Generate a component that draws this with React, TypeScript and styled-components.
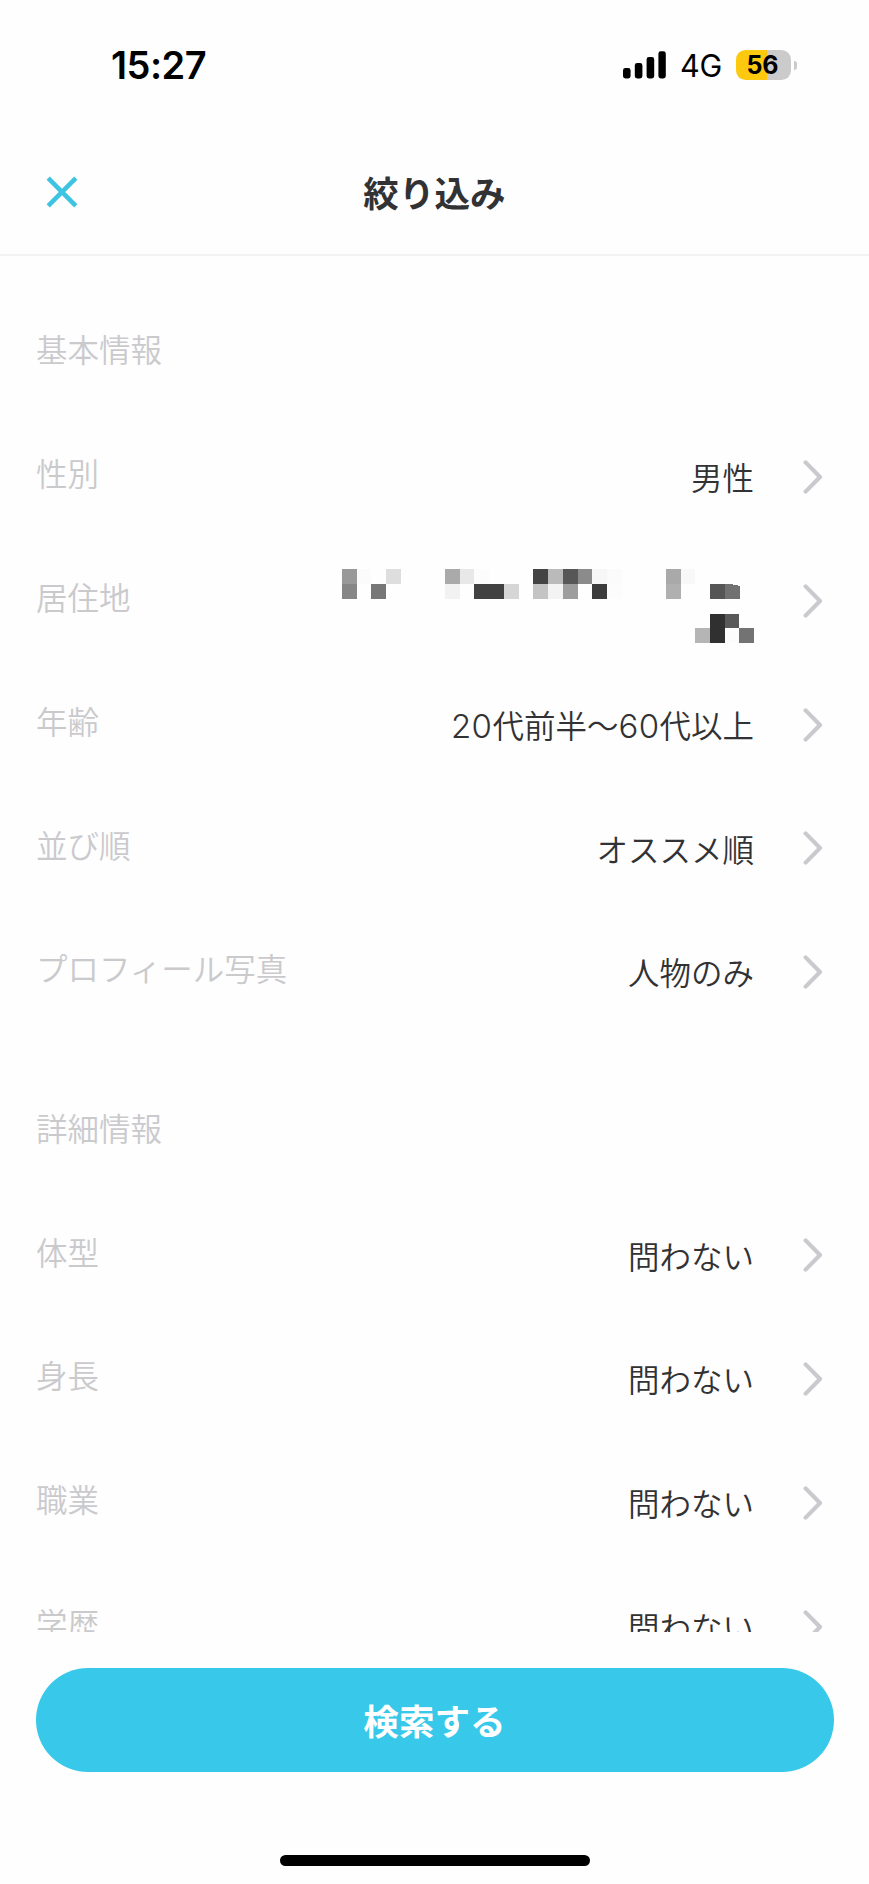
import React from "react";
import styled, { createGlobalStyle } from "styled-components";

const GlobalStyle = createGlobalStyle`
  *, *::before, *::after { box-sizing: border-box; }
  body { margin: 0; background: #fefefe; }
`;

const Screen = styled.div`
  display: flex;
  flex-direction: column;
  width: 869px;
  height: 1884px;
  overflow: hidden;
  background: #fefefe;
  color: #323234;
  font-family: Inter, "Noto Sans CJK JP", sans-serif;
`;

const StatusBar = styled.div`
  display: flex;
  flex: none;
  align-items: center;
  justify-content: space-between;
  height: 130px;
  padding: 0 72px 0 111px;
  color: #000;
`;

const Clock = styled.time`
  font-size: 38px;
  font-weight: 600;
  letter-spacing: -0.5px;
`;

const StatusIcons = styled.div`
  display: flex;
  align-items: center;
`;

const Network = styled.span`
  margin: 1px 14px 0 14px;
  font-size: 30.5px;
  letter-spacing: -0.2px;
`;

const Battery = styled.div`
  display: flex;
  align-items: center;
  gap: 3px;
`;

const BatteryBody = styled.div<{ $level: number }>`
  display: flex;
  align-items: center;
  justify-content: center;
  width: 55px;
  height: 30px;
  padding-right: 2px;
  border-radius: 9.5px;
  background: linear-gradient(90deg, #fdc90f ${(p) => p.$level}%, #cbcbcb ${(p) => p.$level}%);
  font-size: 25px;
  font-weight: 700;
`;

const BatteryTip = styled.div`
  width: 3px;
  height: 9px;
  border-radius: 0 4px 4px 0;
  background: #cbcbcb;
`;

const Header = styled.header`
  display: grid;
  grid-template-columns: 60px 1fr 60px;
  flex: none;
  align-items: center;
  height: 126px;
  padding: 0 32px;
  border-bottom: 2px solid #f3f3f4;
`;

const CloseButton = styled.button`
  display: flex;
  align-items: center;
  justify-content: center;
  width: 60px;
  height: 60px;
  padding: 0;
  border: 0;
  background: none;
`;

const Title = styled.h1`
  margin: 0;
  padding-top: 5px;
  font-size: 35.6px;
  font-weight: 700;
  line-height: 52px;
  text-align: center;
`;

const FilterList = styled.main`
  flex: none;
  height: 1376px;
  padding: 32px 36px 0;
  overflow: hidden;
`;

const Section = styled.section`
  margin-bottom: 35.6px;
`;

const SectionTitle = styled.h2`
  display: flex;
  align-items: center;
  height: 123.8px;
  margin: 0;
  padding-bottom: 3px;
  color: #cacacd;
  font-size: 31.5px;
  font-weight: 350;
`;

const Row = styled.div`
  display: flex;
  align-items: center;
  height: 123.8px;
`;

const Label = styled.span`
  flex: 1;
  padding-bottom: 3px;
  color: #cacacd;
  font-size: 31.5px;
  font-weight: 350;
`;

const Value = styled.span`
  padding-top: 11px;
  font-size: 31.5px;
  font-weight: 350;
  line-height: 46px;
  white-space: nowrap;
`;

const Digits = styled.span`
  font-size: 33px;
  letter-spacing: 0.4px;
`;

const MosaicValue = styled.span`
  display: flex;
  padding-top: 18px;
`;

const ChevronBox = styled.span`
  display: flex;
  padding-top: 6.5px;
  margin: 0 10px 0 49px;
`;

const Footer = styled.footer`
  display: flex;
  flex: none;
  flex-direction: column;
  align-items: center;
  padding: 36px 35.5px 0;
`;

const SearchButton = styled.button`
  width: 100%;
  height: 104px;
  padding: 0 0 2px;
  border: 0;
  border-radius: 52px;
  background: #37c8ea;
  color: #fff;
  font-family: inherit;
  font-size: 35.6px;
  font-weight: 700;
`;

const HomeIndicator = styled.div`
  width: 310px;
  height: 11px;
  margin-top: 83px;
  border-radius: 6px;
  background: #000;
`;

const SignalIcon = () => (
  <svg width="43" height="28" viewBox="0 0 43 28">
    <rect x="0" y="17" width="7.6" height="10.5" rx="2.4" />
    <rect x="11.8" y="12" width="7.6" height="15.5" rx="2.4" />
    <rect x="23.6" y="6" width="7.6" height="21.5" rx="2.4" />
    <rect x="35.4" y="0.3" width="7.4" height="27.2" rx="2.4" />
  </svg>
);

const CloseIcon = () => (
  <svg width="34" height="34" viewBox="0 0 34 34">
    <path d="M3.2 3.2 30.8 30.8M30.8 3.2 3.2 30.8" stroke="#3fc3e2" strokeWidth="4.6" fill="none" />
  </svg>
);

const Chevron = () => (
  <svg width="20" height="34" viewBox="0 0 20 34">
    <path d="M2.6 2.4 17 17 2.6 31.6" stroke="#cacace" strokeWidth="4.2" strokeLinecap="round" strokeLinejoin="round" fill="none" />
  </svg>
);

// Each entry is [column, row, shade] of one block in the obscured address.
const blocks: [number, number, string][] = [
  [0, 0, "#999"], [1, 0, "#fbfbfb"], [3, 0, "#dedede"], [0, 1, "#868686"], [2, 1, "#777"],
  [7, 0, "#aaa"], [8, 0, "#e8e8e8"], [9, 0, "#fcfcfc"], [7, 1, "#f2f2f2"],
  [9, 1, "#414141"], [10, 1, "#414141"], [11, 1, "#d6d6d6"],
  [13, 0, "#444"], [14, 0, "#bababa"], [15, 0, "#575757"], [16, 0, "#8b8b8b"], [17, 0, "#f7f7f7"], [18, 0, "#fbfbfb"],
  [13, 1, "#c4c4c4"], [14, 1, "#f3f3f3"], [15, 1, "#9d9d9d"], [17, 1, "#3c3c3c"], [18, 1, "#fcfcfc"],
  [22, 0, "#a9a9a9"], [23, 0, "#f8f8f8"], [22, 1, "#b0b0b0"],
  [25, 1, "#555"], [25, 3, "#303030"], [26, 3, "#595959"],
  [24, 4, "#b5b5b5"], [25, 4, "#303030"], [26, 4, "#fcfcfc"], [27, 4, "#737373"],
];
const colX = (c: number) => Math.round(c * 14.72);
const rowY = [0, 15, 30, 45, 59, 74];

const Mosaic = () => (
  <svg width="412" height="74" viewBox="0 0 412 74" shapeRendering="crispEdges">
    {blocks.map(([c, r, fill]) => (
      <rect key={`${c}-${r}`} x={colX(c)} y={rowY[r]} width={colX(c + 1) - colX(c)} height={rowY[r + 1] - rowY[r]} fill={fill} />
    ))}
    <path d="M383 15h5l10 2v13h-15z" fill="#717171" />
  </svg>
);

type Filter = { label: string; value?: React.ReactNode };

const basic: Filter[] = [
  { label: "性別", value: "男性" },
  { label: "居住地" },
  { label: "年齢", value: <><Digits>20</Digits>代前半〜<Digits>60</Digits>代以上</> },
  { label: "並び順", value: "オススメ順" },
  { label: "プロフィール写真", value: "人物のみ" },
];

const details: Filter[] = ["体型", "身長", "職業", "学歴"].map((label) => ({ label, value: "問わない" }));

const FilterSection = ({ title, items }: { title: string; items: Filter[] }) => (
  <Section>
    <SectionTitle>{title}</SectionTitle>
    {items.map(({ label, value }) => (
      <Row key={label}>
        <Label>{label}</Label>
        {value ? <Value>{value}</Value> : <MosaicValue><Mosaic /></MosaicValue>}
        <ChevronBox><Chevron /></ChevronBox>
      </Row>
    ))}
  </Section>
);

export default function App() {
  return (
    <Screen lang="ja">
      <GlobalStyle />
      <StatusBar>
        <Clock>15:27</Clock>
        <StatusIcons>
          <SignalIcon />
          <Network>4G</Network>
          <Battery>
            <BatteryBody $level={57}>56</BatteryBody>
            <BatteryTip />
          </Battery>
        </StatusIcons>
      </StatusBar>
      <Header>
        <CloseButton aria-label="閉じる"><CloseIcon /></CloseButton>
        <Title>絞り込み</Title>
      </Header>
      <FilterList>
        <FilterSection title="基本情報" items={basic} />
        <FilterSection title="詳細情報" items={details} />
      </FilterList>
      <Footer>
        <SearchButton>検索する</SearchButton>
        <HomeIndicator />
      </Footer>
    </Screen>
  );
}
